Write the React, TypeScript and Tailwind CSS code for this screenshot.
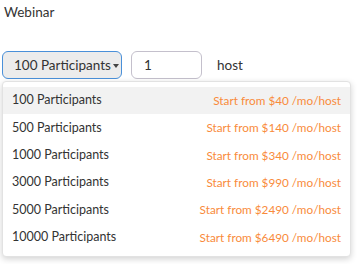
const plans = [
  { size: "100 Participants", price: "$40" },
  { size: "500 Participants", price: "$140" },
  { size: "1000 Participants", price: "$340" },
  { size: "3000 Participants", price: "$990" },
  { size: "5000 Participants", price: "$2490" },
  { size: "10000 Participants", price: "$6490" },
];

const App = () => {
  return (
    <div className="relative h-[264px] w-[358px] bg-white text-[#333] [font-family:Lato,'Liberation_Sans',sans-serif]">
      <div className="pl-[4px] pt-[3px] text-[13.5px] leading-[18px]">Webinar</div>
      <div className="mt-[30px] flex items-center pl-[2px]">
        <button className="flex h-[28px] w-[120px] items-center rounded-[6px] border border-[#4a90d9] bg-[#ececec] pl-[11px] text-[13.5px] text-[#333]">
          100 Participants
          <span className="ml-[2px] mt-[1px] inline-block h-0 w-0 border-x-[3.5px] border-t-[4px] border-x-transparent border-t-[#444]" />
        </button>
        <div className="ml-[9px] flex h-[28px] w-[71px] items-center rounded-[6px] border border-[#c4c0cc] pl-[12px] text-[13.5px]">
          1
        </div>
        <span className="ml-[15px] text-[13.5px]">host</span>
      </div>
      <div className="absolute left-[2px] top-[81px] w-[349px] rounded-[4px] border border-[#e2e2e2] bg-white py-[5px] shadow-[0_2px_6px_rgba(0,0,0,0.18)]">
        {plans.map((p, i) => (
          <div
            key={p.size}
            className={`flex h-[27.4px] items-center justify-between pl-[9px] pr-[9px] ${i === 0 ? "bg-[#f2f2f2]" : ""}`}
          >
            <span className="text-[12.5px] text-[#333]">{p.size}</span>
            <span className="text-[11.75px] text-[#f98b3b]">Start from {p.price} /mo/host</span>
          </div>
        ))}
      </div>
    </div>
  );
};

export default App;
